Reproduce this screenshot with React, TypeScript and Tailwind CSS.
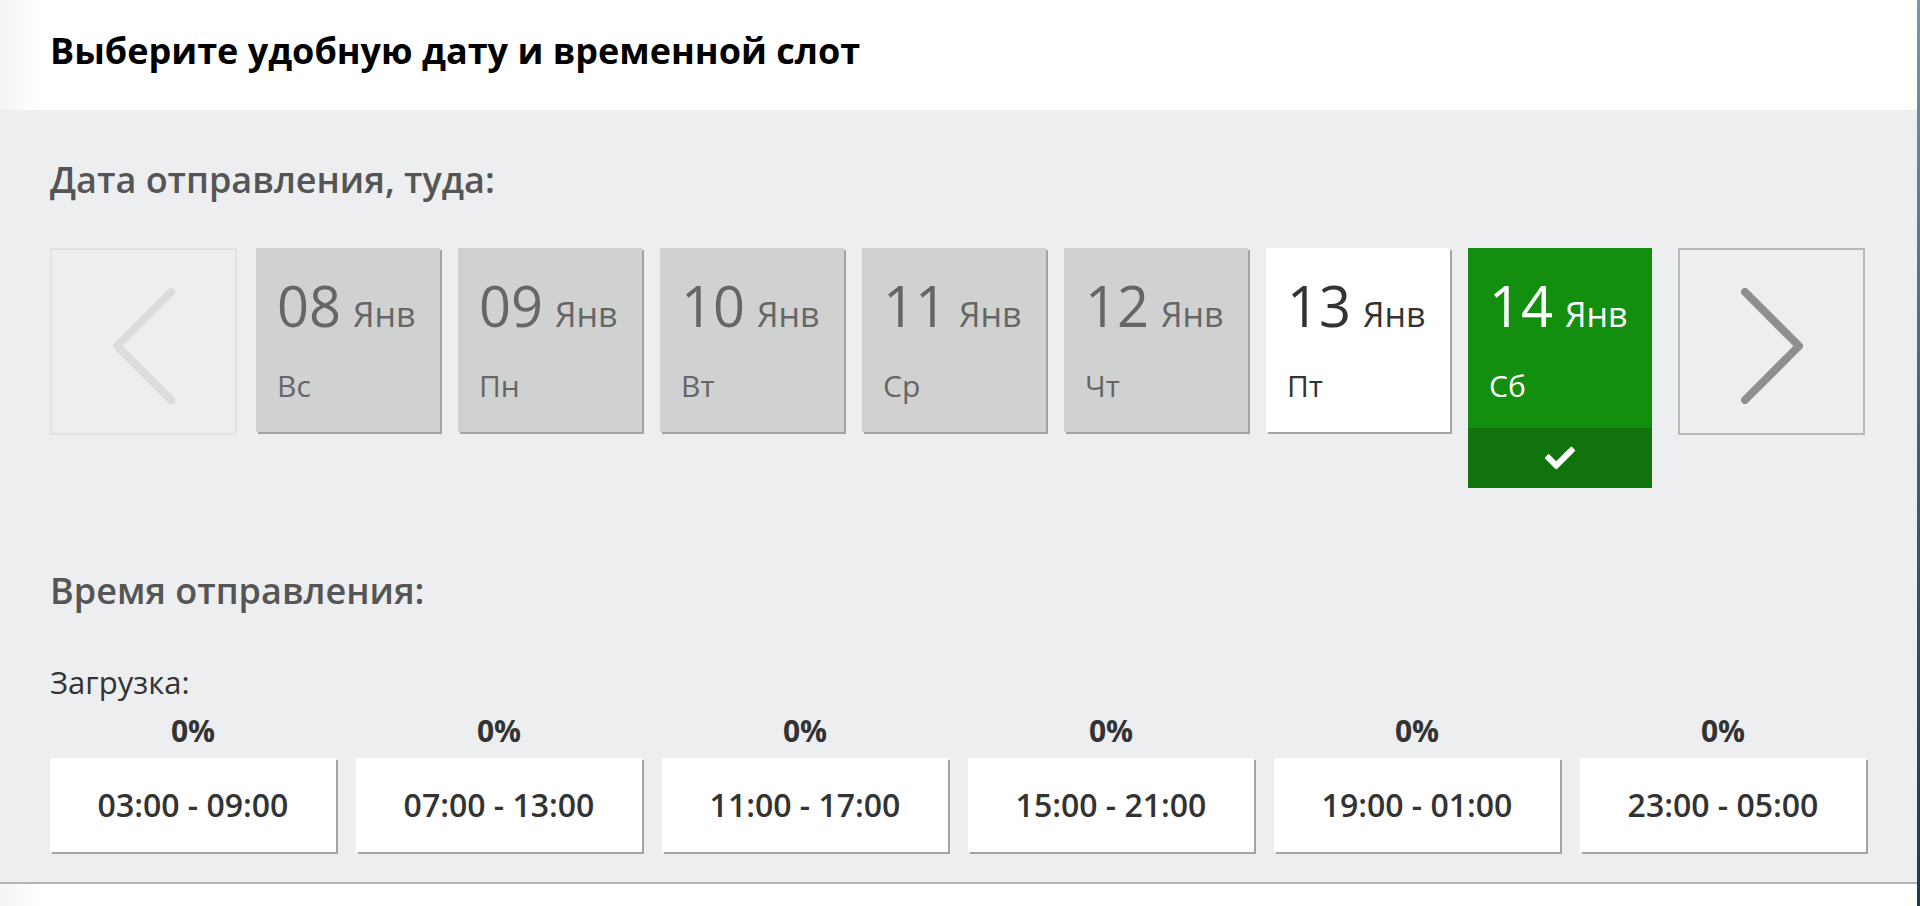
import { FaCheck } from "react-icons/fa";

const days = [
  { d: "08", w: "Вс", kind: "off" },
  { d: "09", w: "Пн", kind: "off" },
  { d: "10", w: "Вт", kind: "off" },
  { d: "11", w: "Ср", kind: "off" },
  { d: "12", w: "Чт", kind: "off" },
  { d: "13", w: "Пт", kind: "on" },
  { d: "14", w: "Сб", kind: "sel" },
];

const slots = ["03:00 - 09:00", "07:00 - 13:00", "11:00 - 17:00", "15:00 - 21:00", "19:00 - 01:00", "23:00 - 05:00"];

function Chevron({ dir, color }: { dir: "left" | "right"; color: string }) {
  const pts = dir === "left" ? "58,4 4,58 58,112" : "4,4 58,58 4,112";
  return (
    <svg width="62" height="116" viewBox="0 0 62 116" className="mt-[8px]">
      <polyline points={pts} fill="none" stroke={color} strokeWidth="8" strokeLinecap="round" strokeLinejoin="round" />
    </svg>
  );
}

function DayCard({ d, w, kind }: { d: string; w: string; kind: string }) {
  if (kind === "sel") {
    return (
      <div className="w-[184px] h-[240px] flex flex-col bg-[#138e0f] text-white font-medium">
        <div className="h-[180px] pl-[21px] pt-[29px]">
          <div className="flex items-baseline gap-[12px]">
            <span className="text-[56px] leading-none">{d}</span>
            <span className="text-[34px] leading-none">Янв</span>
          </div>
          <div className="mt-[38px] text-[30px] leading-none">{w}</div>
        </div>
        <div className="flex-1 bg-[#11730d] flex items-center justify-center">
          <FaCheck size={30} color="#ffffff" />
        </div>
      </div>
    );
  }
  const cls =
    kind === "on"
      ? "bg-white text-[#333333]"
      : "bg-[#d0d2d1] text-[#666666]";
  return (
    <div className={`w-[184px] h-[184px] pl-[21px] pt-[29px] font-medium shadow-[2px_2px_0_#a3a3a3] ${cls}`}>
      <div className="flex items-baseline gap-[12px]">
        <span className="text-[56px] leading-none">{d}</span>
        <span className="text-[34px] leading-none">Янв</span>
      </div>
      <div className="mt-[38px] text-[30px] leading-none">{w}</div>
    </div>
  );
}

export default function App() {
  return (
    <div className="w-[1920px] h-[906px] flex overflow-hidden" style={{ fontFamily: '"Open Sans", "Noto Sans", sans-serif' }}>
      <div className="w-[1917px] flex flex-col bg-white">
        <div className="h-[110px] pt-[33px] pl-[50px] bg-gradient-to-r from-[#f4f4f4] via-white via-[2%] to-white">
          <h1 className="text-[36px] leading-none font-bold text-black">Выберите удобную дату и временной слот</h1>
        </div>
        <div className="bg-[#edeef0] pl-[50px] pt-[52px] h-[772px]">
          <div className="text-[36px] leading-none font-semibold text-[#555555]">Дата отправления, туда:</div>
          <div className="mt-[50px] flex items-start">
            <div className="w-[187px] h-[187px] border-2 border-[#e1e2e4] flex items-center justify-center">
              <Chevron dir="left" color="#dcdcdc" />
            </div>
            <div className="ml-[19px] flex gap-[18px]">
              {days.map((x) => (
                <DayCard key={x.d} {...x} />
              ))}
            </div>
            <div className="ml-[26px] w-[187px] h-[187px] border-2 border-[#b9b9b9] flex items-center justify-center">
              <Chevron dir="right" color="#8f8f8f" />
            </div>
          </div>
          <div className="mt-[85px] text-[36px] leading-none font-semibold text-[#555555]">Время отправления:</div>
          <div className="mt-[58px] text-[31px] leading-none text-[#333333]">Загрузка:</div>
          <div className="mt-[18px] w-[1816px] grid grid-cols-6 gap-[20px]">
            {slots.map((s) => (
              <div key={s} className="flex flex-col items-center">
                <div className="text-[30px] leading-none font-bold text-[#333333]">0%</div>
                <div className="mt-[12px] w-full h-[94px] bg-white shadow-[2px_2px_0_#a3a3a3] flex items-center justify-center text-[32px] leading-none font-semibold text-[#333333]">
                  {s}
                </div>
              </div>
            ))}
          </div>
        </div>
        <div className="flex-1 border-t-2 border-[#b3b3b3] bg-gradient-to-r from-[#f4f4f4] via-white via-[2%] to-white" />
      </div>
      <div className="w-[3px] bg-gradient-to-b from-[#7d97aa] via-[#3e6078] to-[#1b3a50]" />
    </div>
  );
}
